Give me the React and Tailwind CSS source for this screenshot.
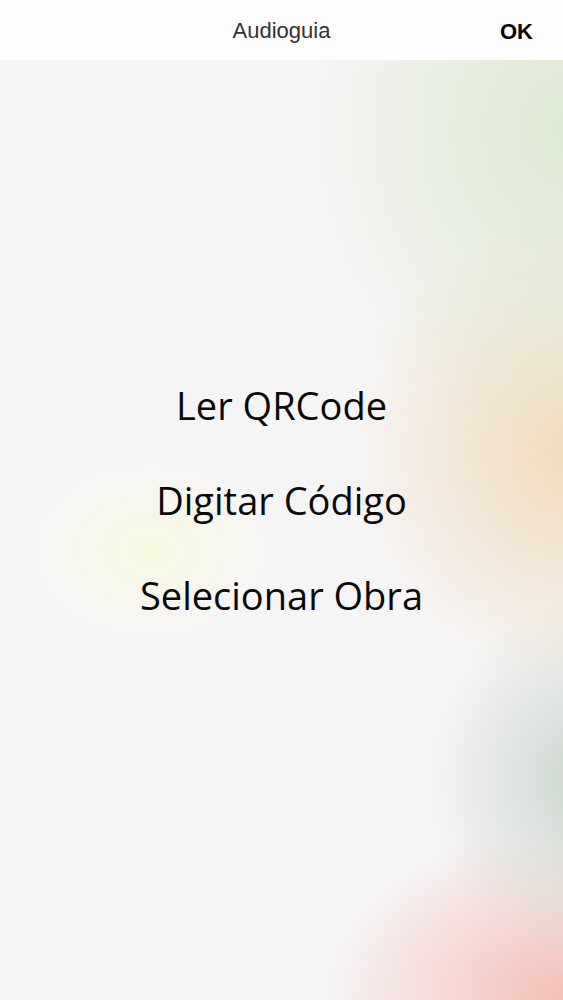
import React from 'react';

const options = ['Ler QRCode', 'Digitar Código', 'Selecionar Obra'];

export default function App() {
  return (
    <div className="relative w-full h-[1000px] overflow-hidden bg-[#f6f5f6]">
      {/* blurred backdrop */}
      <div className="absolute inset-0 bg-[radial-gradient(ellipse_280px_320px_at_570px_130px,#dde9d1_0%,rgba(223,234,211,0)_100%),radial-gradient(ellipse_230px_240px_at_575px_450px,#f0d9ba_0%,rgba(241,219,189,0)_100%),radial-gradient(ellipse_160px_180px_at_585px_780px,#ccd6ce_0%,rgba(201,212,204,0)_100%),radial-gradient(ellipse_240px_170px_at_560px_995px,#f4bfb8_0%,rgba(244,191,184,0)_100%),radial-gradient(ellipse_120px_90px_at_150px_550px,#f7f8e0_0%,rgba(246,247,226,0)_100%)]" />

      <div className="relative flex flex-col h-full">
        <header className="h-[60px] bg-[#fdfdfe] flex items-center relative">
          <div className="flex-1 text-center text-[22px] text-[#333333] font-['Liberation_Sans',Arial,sans-serif]">
            Audioguia
          </div>
          <button className="absolute right-[30px] top-[15px] text-[22px] font-bold text-black font-['Liberation_Sans',Arial,sans-serif]">
            OK
          </button>
        </header>

        <main className="flex-1 flex flex-col items-center pt-[317px] gap-[39px]">
          {options.map((o) => (
            <div
              key={o}
              className="text-[38px] leading-[56px] text-[#0a0a0a] font-['Open_Sans',sans-serif]"
            >
              {o}
            </div>
          ))}
        </main>
      </div>
    </div>
  );
}
